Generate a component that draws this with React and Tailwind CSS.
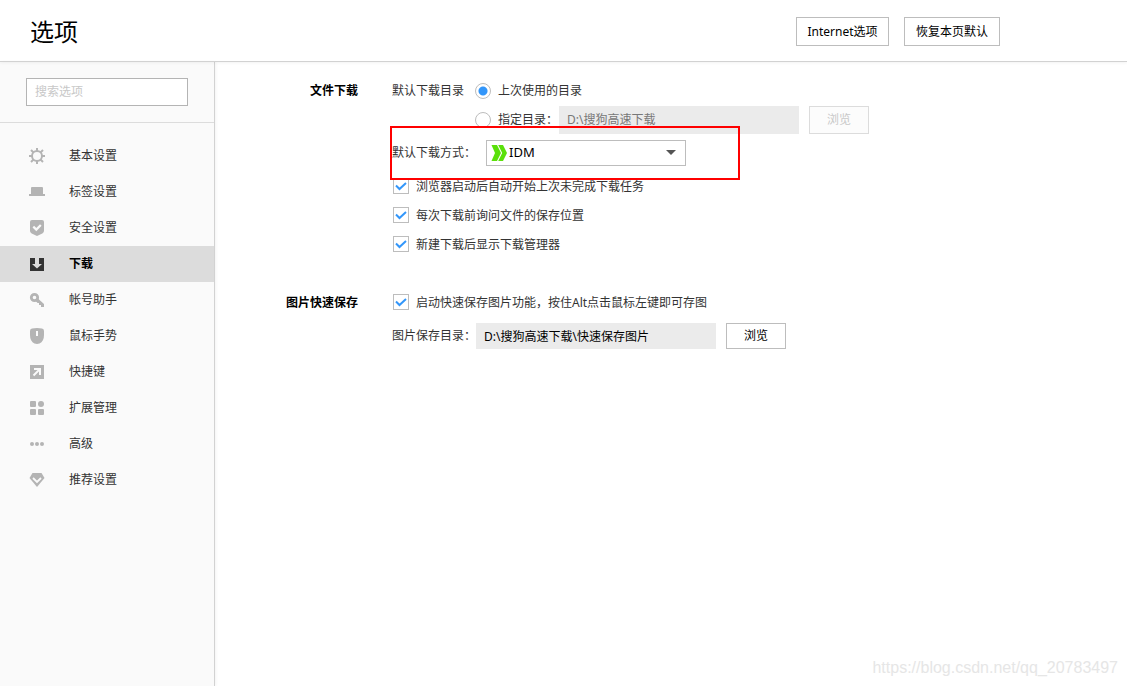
import { useState } from "react";

const NAV_ITEMS = [
  { id: "basic", label: "基本设置", icon: GearIcon },
  { id: "tabs", label: "标签设置", icon: TabIcon },
  { id: "security", label: "安全设置", icon: ShieldIcon },
  { id: "download", label: "下载", icon: DownloadIcon },
  { id: "account", label: "帐号助手", icon: KeyIcon },
  { id: "mouse", label: "鼠标手势", icon: MouseIcon },
  { id: "shortcut", label: "快捷键", icon: ShortcutIcon },
  { id: "extension", label: "扩展管理", icon: ExtensionIcon },
  { id: "advanced", label: "高级", icon: DotsIcon },
  { id: "recommend", label: "推荐设置", icon: DiamondIcon },
];

function Icon({ children }) {
  return (
    <svg
      viewBox="0 0 16 16"
      className="h-4 w-4 shrink-0"
      fill="currentColor"
      aria-hidden="true"
    >
      {children}
    </svg>
  );
}

function GearIcon() {
  return (
    <Icon>
      <circle cx="8" cy="8" r="5" fill="none" stroke="currentColor" strokeWidth="2" />
      <path
        d="M8 0v3M8 13v3M0 8h3M13 8h3M2 2l2.500 2.500M11.500 11.500L14 14M2 14l2.500-2.500M11.500 4.500L14 2"
        fill="none"
        stroke="currentColor"
        strokeWidth="2"
      />
    </Icon>
  );
}

function TabIcon() {
  return (
    <Icon>
      <path d="M3 3h10q1 0 1 1v6h2v2H0v-2h2V4q0-1 1-1z" />
    </Icon>
  );
}

function ShieldIcon() {
  return (
    <Icon>
      <path d="M3 0h10q2 0 2 2v9q0 1.500-1.700 2.400L8 16l-5.300-2.600Q1 12.500 1 11V2q0-2 2-2z" />
      <path d="M4.300 6.600l3 3 4.500-4.700" fill="none" stroke="#fafafa" strokeWidth="2.200" />
    </Icon>
  );
}

function DownloadIcon() {
  return (
    <Icon>
      <path d="M1 2h5v6H3l5 4.500L13 8h-3V2h5v13H1z" />
    </Icon>
  );
}

function KeyIcon() {
  return (
    <Icon>
      <circle cx="5.500" cy="5.500" r="3.200" fill="none" stroke="currentColor" strokeWidth="2.800" />
      <path d="M6.800 9.200l2.400-2.400L15 12v3h-3v-2h-2v-2H8.600z" />
    </Icon>
  );
}

function MouseIcon() {
  return (
    <Icon>
      <path d="M1 3Q1 1 3 .6 8-.6 13 .6 15 1 15 3v4q0 6.500-4.500 8.500-2.500.9-5 0Q1 13.500 1 7z" />
      <path d="M7 3h2v5H7z" fill="#fafafa" />
    </Icon>
  );
}

function ShortcutIcon() {
  return (
    <Icon>
      <path d="M1 1h14v14H1z" />
      <path
        d="M4.500 11.500l6-6M5 5h6v6"
        fill="none"
        stroke="#fafafa"
        strokeWidth="2"
      />
    </Icon>
  );
}

function ExtensionIcon() {
  return (
    <Icon>
      <rect x="1" y="1" width="6" height="6" rx="1" />
      <circle cx="12" cy="4" r="3" />
      <rect x="1" y="9" width="6" height="6" rx="1" />
      <rect x="9" y="9" width="6" height="6" rx="1" />
    </Icon>
  );
}

function DotsIcon() {
  return (
    <Icon>
      <circle cx="3" cy="8" r="2" />
      <circle cx="8" cy="8" r="2" />
      <circle cx="13" cy="8" r="2" />
    </Icon>
  );
}

function DiamondIcon() {
  return (
    <Icon>
      <path d="M3.500 1h9L15.500 6 8 15 .5 6z" />
      <path d="M4 6l4 4 4-4" fill="none" stroke="#fafafa" strokeWidth="1.800" />
    </Icon>
  );
}

function IdmIcon() {
  return (
    <svg viewBox="0 0 16 16" className="h-4 w-4" fill="#5ae00a" aria-hidden="true">
      <path d="M.5 0h5.500l4 8-4 8H.5L4 8z" />
      <path d="M7.200 0H12l4 8-4 8H7.200l4-8z" />
    </svg>
  );
}

function Button({ children, className = "", ...props }) {
  return (
    <button
      type="button"
      className={`border border-[#bdbdbd] bg-white text-black hover:border-[#3296fa] disabled:border-[#dcdcdc] disabled:bg-[#fcfcfc] disabled:text-[#c8c8c8] ${className}`}
      {...props}
    >
      {children}
    </button>
  );
}

function Checkbox({ children }) {
  return (
    <label className="flex h-[29px] w-fit items-center gap-[7px]">
      <span className="mb-px ml-px grid h-4 w-4">
        <input
          type="checkbox"
          defaultChecked
          className="peer col-start-1 row-start-1 h-4 w-4 appearance-none border border-[#bdbdbd] bg-white"
        />
        <svg
          viewBox="0 0 16 16"
          className="pointer-events-none invisible col-start-1 row-start-1 h-4 w-4 peer-checked:visible"
          fill="none"
          stroke="#3296fa"
          strokeWidth="2"
          aria-hidden="true"
        >
          <path d="M3 7.500l3.500 3.500L13 5" />
        </svg>
      </span>
      {children}
    </label>
  );
}

function Radio({ children, ...props }) {
  return (
    <label className="flex items-center gap-[7px]">
      <input
        type="radio"
        className="h-4 w-4 appearance-none rounded-full border border-[#bdbdbd] bg-white checked:bg-[radial-gradient(circle,#3296fa_4px,white_5px)]"
        {...props}
      />
      {children}
    </label>
  );
}

function Section({ title, children }) {
  return (
    <section className="flex">
      <h2 className="mr-[34px] flex h-[30px] w-[143px] shrink-0 items-center justify-end font-bold text-black">
        {title}
      </h2>
      <div className="min-w-0 flex-1">{children}</div>
    </section>
  );
}

export default function App() {
  const [active, setActive] = useState("download");
  const [dirMode, setDirMode] = useState("last");

  return (
    <div className="relative flex min-h-screen flex-col bg-white font-['Noto_Sans','Noto_Sans_CJK_SC',sans-serif] text-xs text-[#333]">
      <header className="z-10 flex h-[62px] items-center justify-between border-b border-[#d2d2d2] pt-[2px] pr-[127px] pl-[30px] shadow-[0_1px_3px_#0000000d]">
        <h1 className="text-2xl text-black">选项</h1>
        <div className="flex gap-[15px]">
          <Button className="h-[29px] w-[93px]">Internet选项</Button>
          <Button className="h-[29px] w-24">恢复本页默认</Button>
        </div>
      </header>

      <div className="flex flex-1">
        <aside className="w-[215px] shrink-0 border-r border-[#d2d2d2] bg-[#fafafa] shadow-[1px_0_3px_#0000000d]">
          <div className="border-b border-[#dcdcdc] px-[26px] py-4">
            <input
              type="search"
              aria-label="搜索选项"
              placeholder="搜索选项"
              className="block h-7 w-full border border-[#b4b4b4] bg-white px-2 pb-[2px] outline-none placeholder:text-[#c8c8c8]"
            />
          </div>
          <nav className="pt-[15px]">
            {NAV_ITEMS.map(({ id, label, icon: ItemIcon }) => (
              <button
                key={id}
                type="button"
                onClick={() => setActive(id)}
                className={`flex h-9 w-full items-center gap-6 pl-[29px] ${
                  active === id ? "bg-[#dcdcdc] font-bold text-black" : ""
                }`}
              >
                <span className={active === id ? "text-[#333]" : "text-[#b4b4b4]"}>
                  <ItemIcon />
                </span>
                {label}
              </button>
            ))}
          </nav>
        </aside>

        <main className="flex min-w-0 flex-1 flex-col gap-[29px] pt-[14px]">
          <Section title="文件下载">
            <div className="flex">
              <span className="flex h-[29px] w-[83px] items-center">默认下载目录</span>
              <div className="flex flex-col gap-px">
                <div className="flex h-[29px]">
                  <Radio
                    name="dir"
                    checked={dirMode === "last"}
                    onChange={() => setDirMode("last")}
                  >
                    上次使用的目录
                  </Radio>
                </div>
                <div className="flex h-7">
                  <div className="flex w-[84px] pb-px">
                    <Radio
                      name="dir"
                      checked={dirMode === "custom"}
                      onChange={() => setDirMode("custom")}
                    >
                      指定目录：
                    </Radio>
                  </div>
                  <input
                    type="text"
                    aria-label="指定目录"
                    readOnly
                    disabled={dirMode !== "custom"}
                    value="D:\搜狗高速下载"
                    className="w-60 bg-[#ebebeb] px-2 text-black disabled:text-[#787878]"
                  />
                  <Button className="ml-[10px] w-[60px]" disabled={dirMode !== "custom"}>
                    浏览
                  </Button>
                </div>
              </div>
            </div>

            <div className="relative my-[6px] flex h-[26px] items-center">
              <label htmlFor="method" className="w-[94px]">
                默认下载方式：
              </label>
              <div className="relative h-full w-[200px]">
                <select
                  id="method"
                  className="h-full w-full appearance-none border border-[#bdbdbd] bg-white pl-[22px] text-[13px] text-black"
                >
                  <option>IDM</option>
                </select>
                <span className="pointer-events-none absolute top-[5px] left-[5px]">
                  <IdmIcon />
                </span>
                <svg
                  viewBox="0 0 8 4"
                  className="pointer-events-none absolute top-[10px] right-[10px] h-[5px] w-[10px]"
                  fill="#555"
                  aria-hidden="true"
                >
                  <path d="M0 0h8L4 4z" />
                </svg>
              </div>
              {/* highlight frame around the download method */}
              <div className="pointer-events-none absolute -top-[14px] -left-[2px] h-[54px] w-[350px] border-2 border-[#ff0000]" />
            </div>

            <Checkbox>浏览器启动后自动开始上次未完成下载任务</Checkbox>
            <Checkbox>每次下载前询问文件的保存位置</Checkbox>
            <Checkbox>新建下载后显示下载管理器</Checkbox>
          </Section>

          <Section title="图片快速保存">
            <Checkbox>启动快速保存图片功能，按住Alt点击鼠标左键即可存图</Checkbox>
            <div className="mt-[6px] flex h-[26px] items-center">
              <label htmlFor="image-dir" className="w-[84px]">
                图片保存目录：
              </label>
              <input
                id="image-dir"
                type="text"
                readOnly
                value="D:\搜狗高速下载\快速保存图片"
                className="h-full w-60 bg-[#ebebeb] px-2 text-black"
              />
              <Button className="ml-[10px] h-full w-[60px]">浏览</Button>
            </div>
          </Section>
        </main>
      </div>

      <p className="pointer-events-none absolute right-[9px] bottom-[6px] font-['Liberation_Sans',sans-serif] text-base text-[#e6e6e6]">
        https://blog.csdn.net/qq_20783497
      </p>
    </div>
  );
}
